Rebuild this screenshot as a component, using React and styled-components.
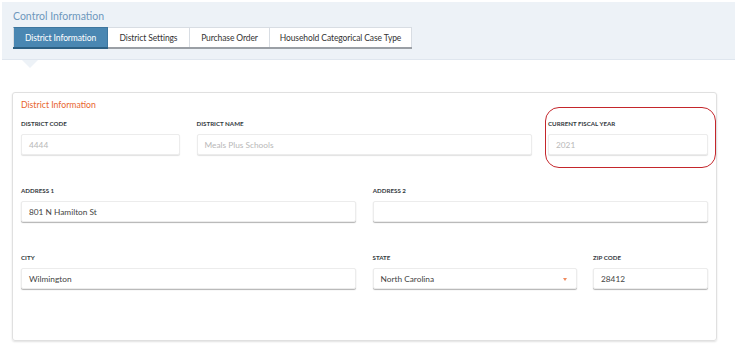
import styled, { createGlobalStyle } from "styled-components";

const GlobalStyle = createGlobalStyle`
  html, body {
    margin: 0;
    padding: 0;
    background: #ffffff;
    font-family: Lato, "Noto Sans", sans-serif;
  }
`;

const tabs = [
  { label: "District Information", width: 95, active: true },
  { label: "District Settings", width: 82 },
  { label: "Purchase Order", width: 80 },
  { label: "Household Categorical Case Type", width: 142 },
];

export default function App() {
  return (
    <Page>
      <GlobalStyle />
      <HeaderBand>
        <PageTitle>Control Information</PageTitle>
        <TabList>
          {tabs.map((t) => (
            <Tab key={t.label} $active={t.active} $width={t.width}>
              {t.label}
            </Tab>
          ))}
        </TabList>
        <Pointer />
      </HeaderBand>

      <Card>
        <CardTitle>District Information</CardTitle>

        <Row $cols="159px 1fr 160px">
          <Field>
            <Label>District Code</Label>
            <Input $disabled>4444</Input>
          </Field>
          <Field>
            <Label>District Name</Label>
            <Input $disabled>Meals Plus Schools</Input>
          </Field>
          <HighlightField>
            <Label>Current Fiscal Year</Label>
            <Input $disabled>2021</Input>
          </HighlightField>
        </Row>

        <Row $cols="1fr 1fr">
          <Field>
            <Label>Address 1</Label>
            <Input>801 N Hamilton St</Input>
          </Field>
          <Field>
            <Label>Address 2</Label>
            <Input />
          </Field>
        </Row>

        <Row $cols="1fr 204px 115px">
          <Field>
            <Label>City</Label>
            <Input>Wilmington</Input>
          </Field>
          <Field>
            <Label>State</Label>
            <Input>
              North Carolina
              <Caret />
            </Input>
          </Field>
          <Field>
            <Label>Zip Code</Label>
            <Input>28412</Input>
          </Field>
        </Row>
      </Card>
    </Page>
  );
}

const Page = styled.div`
  width: 735px;
  height: 351px;
  padding-top: 2px;
  box-sizing: border-box;
  overflow: hidden;
`;

const HeaderBand = styled.div`
  position: relative;
  margin-left: 2px;
  height: 51px;
  background: #edf2f7;
  border-bottom: 1px solid #dfe6ee;
  padding: 6px 0 0 11px;
  box-sizing: content-box;
`;

const PageTitle = styled.div`
  font-size: 10.5px;
  line-height: 16px;
  color: #6e98bd;
  margin-bottom: 3px;
`;

const TabList = styled.div`
  display: flex;
`;

const Tab = styled.div`
  width: ${({ $width }) => $width}px;
  height: 20px;
  box-sizing: border-box;
  display: flex;
  align-items: center;
  justify-content: center;
  font-size: 8.5px;
  letter-spacing: -0.1px;
  white-space: nowrap;
  background: #ffffff;
  color: #333333;
  border: 1px solid #d8dde3;
  border-left: none;
  border-bottom: none;
  box-shadow: 0 2px 0 #9a9fa5;
  &:first-child {
    border-left: 1px solid #d8dde3;
  }
  ${({ $active }) =>
    $active &&
    `
    background: #4a87b2;
    color: #ffffff;
    border-color: #3d769e;
    box-shadow: 0 2px 0 #2c5f82;
  `}
`;

const Pointer = styled.div`
  position: absolute;
  left: 20px;
  bottom: -9px;
  width: 0;
  height: 0;
  border-left: 8px solid transparent;
  border-right: 8px solid transparent;
  border-top: 8px solid #edf2f7;
`;

const Card = styled.div`
  margin: 32px 0 0 12px;
  width: 705px;
  height: 249px;
  box-sizing: border-box;
  border: 1px solid #e0e0e0;
  border-radius: 3px;
  box-shadow: 0 1px 2px rgba(0, 0, 0, 0.12);
  padding: 6px 8px 0 8px;
`;

const CardTitle = styled.div`
  font-size: 8.7px;
  line-height: 12px;
  color: #e8662e;
  margin-bottom: 9px;
`;

const Row = styled.div`
  display: grid;
  grid-template-columns: ${({ $cols }) => $cols};
  column-gap: 16.5px;
  margin-bottom: 32px;
`;

const Field = styled.div`
  display: flex;
  flex-direction: column;
  min-width: 0;
`;

const HighlightField = styled(Field)`
  position: relative;
  &::after {
    content: "";
    position: absolute;
    left: -3px;
    right: -8px;
    top: -13px;
    bottom: -13px;
    border: 1.8px solid #c4262b;
    border-radius: 14px;
    pointer-events: none;
  }
`;

const Label = styled.div`
  font-size: 6.2px;
  line-height: 8px;
  font-weight: 700;
  text-transform: uppercase;
  color: #333a40;
  margin-bottom: 6px;
  white-space: nowrap;
`;

const Input = styled.div`
  position: relative;
  height: 21px;
  box-sizing: border-box;
  display: flex;
  align-items: center;
  padding: 0 7px;
  font-size: 8.3px;
  background: #ffffff;
  border: 1px solid #ececec;
  border-radius: 2px;
  color: ${({ $disabled }) => ($disabled ? "#b8b8b8" : "#444444")};
  box-shadow: ${({ $disabled }) =>
    $disabled ? "0 1px 1px rgba(0,0,0,0.12)" : "0 1px 1px rgba(0,0,0,0.3)"};
`;

const Caret = styled.span`
  position: absolute;
  right: 9px;
  top: 9px;
  width: 0;
  height: 0;
  border-left: 2.5px solid transparent;
  border-right: 2.5px solid transparent;
  border-top: 3px solid #f08a5d;
`;
